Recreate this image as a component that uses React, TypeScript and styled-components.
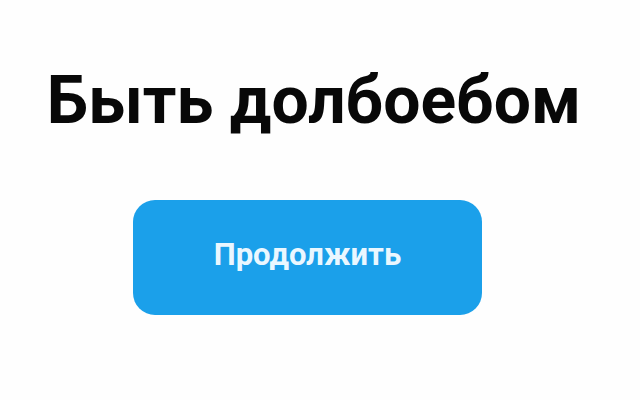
import React from "react";
import styled, { createGlobalStyle } from "styled-components";

const GlobalStyle = createGlobalStyle`
  html, body {
    margin: 0;
    padding: 0;
    background: #ffffff;
  }
  body {
    font-family: Roboto, "Liberation Sans", sans-serif;
  }
`;

const Screen = styled.div`
  width: 640px;
  height: 400px;
  box-sizing: border-box;
  display: flex;
  flex-direction: column;
  align-items: center;
  padding-top: 68px;
  padding-right: 25px;
  background: #fefefe;
`;

const Title = styled.h1`
  margin: 0 0 0 13px;
  font-family: Roboto, "Liberation Sans", sans-serif;
  font-weight: 700;
  font-size: 66px;
  line-height: 66px;
  color: #080808;
  white-space: nowrap;
`;

const ContinueButton = styled.button`
  margin-top: 66px;
  width: 349px;
  height: 115px;
  box-sizing: border-box;
  padding: 0 0 6px;
  border: none;
  border-radius: 22px;
  background: #1ba0ea;
  color: #eaf7ff;
  font-family: Roboto, "Liberation Sans", sans-serif;
  font-weight: 700;
  font-size: 31px;
  display: flex;
  align-items: center;
  justify-content: center;
  cursor: pointer;
`;

export default function App() {
  return (
    <>
      <GlobalStyle />
      <Screen>
        <Title>Быть долбоебом</Title>
        <ContinueButton>Продолжить</ContinueButton>
      </Screen>
    </>
  );
}
